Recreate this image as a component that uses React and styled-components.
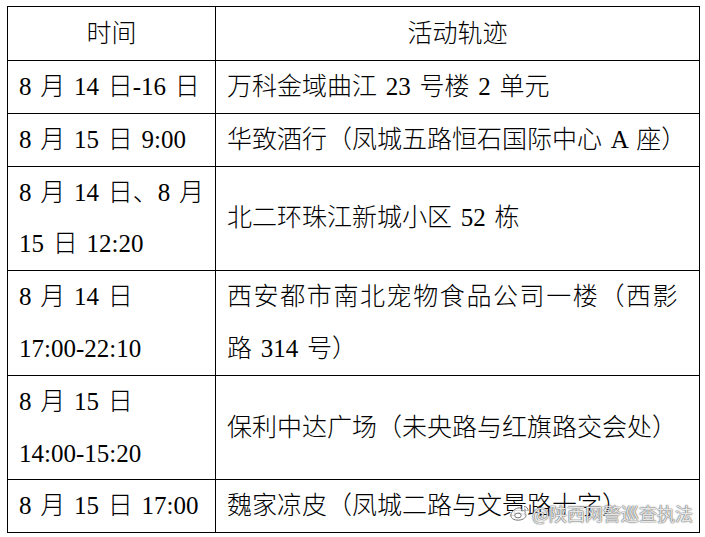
import React from 'react';
import styled, { createGlobalStyle } from 'styled-components';

const Global = createGlobalStyle`
  html, body { margin: 0; padding: 0; background: #fff; }
  body { font-family: "Liberation Serif", "Noto Sans CJK SC", serif; color: #000; }
`;

const Page = styled.div`
  position: relative;
  width: 705px;
  height: 537px;
  padding: 6px 0 0 7px;
  box-sizing: border-box;
  background: #fff;
  overflow: hidden;
`;

const Table = styled.table`
  border-collapse: collapse;
  table-layout: fixed;
  width: 692px;
  font-size: 25px;
  font-weight: 300;
`;

const Col = styled.col`
  width: ${p => p.$w}px;
`;

const Cell = styled.td`
  border: 1px solid #000;
  padding: ${p => (p.$center ? '0' : '0 2px 0 11px')};
  height: ${p => (p.$head ? '53px' : 'auto')};
  line-height: 51.8px;
  font-weight: 300;
  white-space: nowrap;
  overflow: hidden;
  text-align: ${p => (p.$center ? 'center' : 'left')};
  vertical-align: middle;
  word-spacing: 0.1em;
`;

const Spread = styled.span`
  letter-spacing: ${p => p.$ls || 0}px;
`;

const Watermark = styled.div`
  position: absolute;
  right: 12px;
  bottom: 14px;
  display: flex;
  align-items: center;
  gap: 1px;
  font-family: "Noto Sans CJK SC", sans-serif;
  font-size: 18px;
  line-height: 20px;
  color: rgba(255, 255, 255, 0.85);
  text-shadow: 0 0 1px #666, 0 0 1px #666, 0 0 2px rgba(0,0,0,0.35);
`;

const rows = [
  { time: ['8 月 14 日-16 日'], place: ['万科金域曲江 23 号楼 2 单元'] },
  { time: ['8 月 15 日 9:00'], place: ['华致酒行（凤城五路恒石国际中心 A 座）'] },
  { time: ['8 月 14 日、8 月', '15 日 12:20'], place: ['北二环珠江新城小区 52 栋'] },
  { time: ['8 月 14 日', '17:00-22:10'], place: ['西安都市南北宠物食品公司一楼（西影', '路 314 号）'], ls: 1.6 },
  { time: ['8 月 15 日', '14:00-15:20'], place: ['保利中达广场（未央路与红旗路交会处）'] },
  { time: ['8 月 15 日 17:00'], place: ['魏家凉皮（凤城二路与文景路十字）'] },
];

function Lines({ lines, ls }) {
  return lines.map((l, i) => (
    <React.Fragment key={i}>
      {i > 0 && <br />}
      {i === 0 && ls ? <Spread $ls={ls}>{l}</Spread> : l}
    </React.Fragment>
  ));
}

function WeiboMark() {
  return (
    <svg width="22" height="18" viewBox="0 0 22 18">
      <path d="M9 4c-4 1-8 5-7 8.5C3 16 9 17 13 15.5c4-1.5 5-4.5 3-6 1-2.5-1-3.5-3.5-2.5C13 4.5 11.5 3.5 9 4z" fill="rgba(255,255,255,0.85)" stroke="#777" strokeWidth="1" />
      <ellipse cx="9" cy="11.5" rx="3.2" ry="2.4" fill="none" stroke="#777" strokeWidth="1" />
      <path d="M15 2.5c2.5 0 4.5 2 4 4.5M15 5c1.2 0 2 .8 1.8 2" fill="none" stroke="#777" strokeWidth="1" />
    </svg>
  );
}

export default function App() {
  return (
    <Page>
      <Global />
      <Table>
        <colgroup>
          <Col $w={208} />
          <Col $w={484} />
        </colgroup>
        <thead>
          <tr>
            <Cell as="th" $head $center>时间</Cell>
            <Cell as="th" $head $center>活动轨迹</Cell>
          </tr>
        </thead>
        <tbody>
          {rows.map((r, i) => (
            <tr key={i}>
              <Cell><Lines lines={r.time} /></Cell>
              <Cell><Lines lines={r.place} ls={r.ls} /></Cell>
            </tr>
          ))}
        </tbody>
      </Table>
      <Watermark>
        <WeiboMark />
        <span>@陕西网警巡查执法</span>
      </Watermark>
    </Page>
  );
}
